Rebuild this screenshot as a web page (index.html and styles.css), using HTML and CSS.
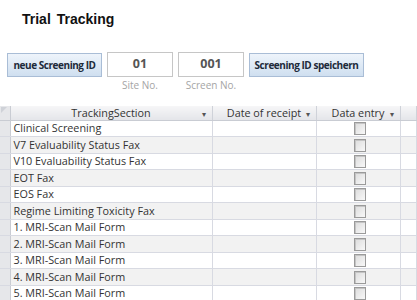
FILE: index.html
```html
<!DOCTYPE html>
<html lang="de">
	<head>
		<meta charset="utf-8">
		<title>Trial Tracking</title>
		<link rel="stylesheet" href="styles.css">
	</head>
	<body>
		<h1 class="titel">Trial Tracking</h1>

		<div class="werkzeug">
			<button class="knopf knopf-neu">neue Screening ID</button>
			<div class="feld">
				<div class="feld-box">01</div>
				<span class="feld-label">Site No.</span>
			</div>
			<div class="feld">
				<div class="feld-box">001</div>
				<span class="feld-label">Screen No.</span>
			</div>
			<button class="knopf knopf-speichern">Screening ID speichern</button>
		</div>

		<table class="liste">
			<tr class="kopf">
				<th class="sel"><span class="ecke"></span></th>
				<th class="sp-section">TrackingSection <span class="pfeil">&#9662;</span></th>
				<th class="sp-datum">Date of receipt <span class="pfeil">&#9662;</span></th>
				<th class="sp-entry">Data entry <span class="pfeil">&#9662;</span></th>
				<th class="sp-rest"></th>
			</tr>
			<tr><td class="sel"></td><td>Clinical Screening</td><td></td><td class="box"><span class="check"></span></td><td></td></tr>
			<tr><td class="sel"></td><td>V7 Evaluability Status Fax</td><td></td><td class="box"><span class="check"></span></td><td></td></tr>
			<tr><td class="sel"></td><td>V10 Evaluability Status Fax</td><td></td><td class="box"><span class="check"></span></td><td></td></tr>
			<tr><td class="sel"></td><td>EOT Fax</td><td></td><td class="box"><span class="check"></span></td><td></td></tr>
			<tr><td class="sel"></td><td>EOS Fax</td><td></td><td class="box"><span class="check"></span></td><td></td></tr>
			<tr><td class="sel"></td><td>Regime Limiting Toxicity Fax</td><td></td><td class="box"><span class="check"></span></td><td></td></tr>
			<tr><td class="sel"></td><td>1. MRI-Scan Mail Form</td><td></td><td class="box"><span class="check"></span></td><td></td></tr>
			<tr><td class="sel"></td><td>2. MRI-Scan Mail Form</td><td></td><td class="box"><span class="check"></span></td><td></td></tr>
			<tr><td class="sel"></td><td>3. MRI-Scan Mail Form</td><td></td><td class="box"><span class="check"></span></td><td></td></tr>
			<tr><td class="sel"></td><td>4. MRI-Scan Mail Form</td><td></td><td class="box"><span class="check"></span></td><td></td></tr>
			<tr><td class="sel"></td><td>5. MRI-Scan Mail Form</td><td></td><td class="box"><span class="check"></span></td><td></td></tr>
		</table>
	</body>
</html>
```

FILE: styles.css
```css
* {
	margin: 0;
	padding: 0;
	box-sizing: border-box;
}

body {
	width: 417px;
	height: 300px;
	overflow: hidden;
	background: #fff;
	font-family: "Open Sans", "Liberation Sans", sans-serif;
	color: #333;
}

.titel {
	font-family: "Liberation Sans", Arial, sans-serif;
	font-size: 14px;
	font-weight: bold;
	color: #111;
	padding: 11px 0 0 22px;
	height: 52px;
	word-spacing: 2px;
}

.werkzeug {
	display: flex;
	align-items: flex-start;
	padding-left: 7px;
	height: 54px;
}

	.knopf {
		height: 24px;
		margin-top: 1px;
		border: 1px solid #a9bdd6;
		background: linear-gradient(#eef4fb, #cfdff0);
		font-family: "Open Sans", "Liberation Sans", sans-serif;
		font-size: 10px;
		font-weight: bold;
		color: #1d2a3a;
		letter-spacing: -0.45px;
	}

	.knopf-neu {
		width: 95px;
	}

	.knopf-speichern {
		width: 115px;
		margin-left: 5px;
	}

	.feld {
		display: flex;
		flex-direction: column;
		align-items: center;
		margin-left: 5px;
	}

		.feld-box {
			width: 66px;
			height: 25px;
			border: 1px solid #c6c6c6;
			text-align: center;
			font-size: 12.5px;
			font-weight: bold;
			line-height: 22px;
			color: #555;
		}

		.feld-label {
			font-size: 10px;
			color: #a5a5a5;
			margin-top: 1px;
		}

.liste {
	border-collapse: collapse;
	table-layout: fixed;
	width: 417px;
	font-size: 10.8px;
}

	.liste th {
		height: 14px;
		font-weight: normal;
		background: linear-gradient(#f6f6f7, #e4e5e9);
		border-right: 1px solid #cfd2d9;
		border-bottom: 1px solid #c9ccd3;
		position: relative;
		color: #333;
		white-space: nowrap;
		line-height: 13px;
	}

	.liste td {
		height: 16.5px;
		border-right: 1px solid #d8dae2;
		border-bottom: 1px solid #d8dae2;
		padding-left: 3px;
		white-space: nowrap;
		line-height: 14px;
	}

	.liste tr:nth-child(odd) td {
		background: #f2f2f2;
	}

	.liste td.sel, .liste th.sel {
		width: 10px;
		background: #e6e7ea;
		border-right: 1px solid #c9ccd3;
		padding: 0;
	}

	.liste tr:nth-child(odd) td.sel {
		background: #e6e7ea;
	}

	.ecke {
		position: absolute;
		left: 1px;
		top: 1px;
		width: 0;
		height: 0;
		border-top: 6px solid #cfd2d8;
		border-right: 6px solid transparent;
	}

	.sp-section {
		width: 202px;
	}

	.sp-datum {
		width: 104px;
	}

	.sp-entry {
		width: 84px;
	}

	.pfeil {
		position: absolute;
		right: 6px;
		top: 1px;
		font-size: 8px;
		color: #555;
	}

	.liste td.box {
		text-align: center;
		padding-left: 0;
	}

	.check {
		display: inline-block;
		width: 12px;
		height: 13px;
		margin-top: 1px;
		margin-left: 3px;
		vertical-align: top;
		border: 1px solid #9a9a9a;
		background: linear-gradient(135deg, #dcdcdc, #f8f8f8);
		box-shadow: inset 1px 1px 0 #c4c4c4;
	}
```
